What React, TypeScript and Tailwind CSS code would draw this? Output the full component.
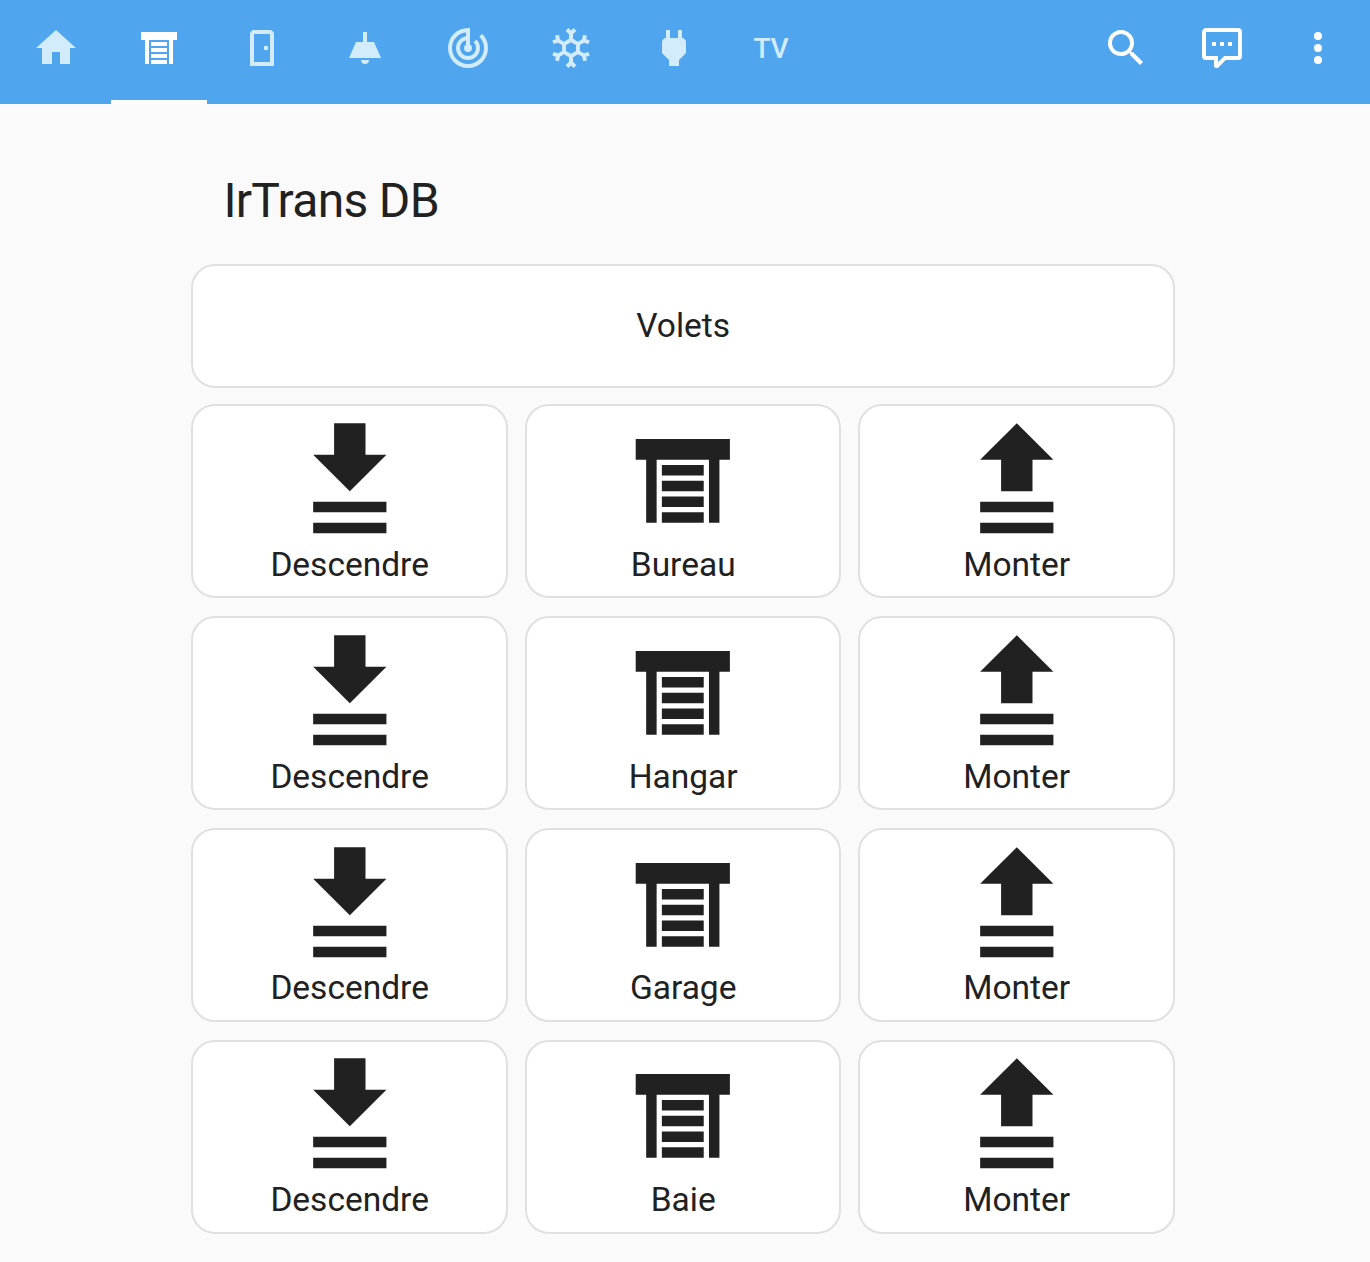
import React from "react";

const P = {
  home: "M10,20V14H14V20H19V12H22L12,3L2,12H5V20H10Z",
  shutter: "M3 4H21V8H19V20H17V8H7V20H5V8H3V4M8 9H16V11H8V9M8 12H16V14H8V12M8 15H16V17H8V15M8 18H16V20H8V18Z",
  door: "M8,3C6.89,3 6,3.89 6,5V21H18V5C18,3.89 17.11,3 16,3H8M8,5H16V19H8V5M13,11V13H15V11H13Z",
  lamp: "M11 4H13V9H16.5L20 17H4L7.5 9H11ZM10 18H14A2 2 0 0 1 10 18Z",
  radar: "M19.07,4.93L17.66,6.34C19.1,7.79 20,9.79 20,12A8,8 0 0,1 12,20A8,8 0 0,1 4,12C4,7.92 7.05,4.56 11,4.07V6.09C8.16,6.57 6,9.03 6,12A6,6 0 0,0 12,18A6,6 0 0,0 18,12C18,10.34 17.33,8.84 16.24,7.76L14.83,9.17C15.55,9.9 16,10.9 16,12A4,4 0 0,1 12,16A4,4 0 0,1 8,12C8,10.14 9.28,8.59 11,8.14V10.28C10.4,10.63 10,11.26 10,12A2,2 0 0,0 12,14A2,2 0 0,0 14,12C14,11.26 13.6,10.62 13,10.28V2H12A10,10 0 0,0 2,12A10,10 0 0,0 12,22A10,10 0 0,0 22,12C22,9.24 20.88,6.74 19.07,4.93Z",
  snow: "M20.79,13.95L18.46,14.57L16.46,13.44V10.56L18.46,9.43L20.79,10.05L21.31,8.12L19.54,7.65L20,5.88L18.07,5.36L17.45,7.69L15.45,8.82L13,7.38V5.12L14.71,3.41L13.29,2L12,3.29L10.71,2L9.29,3.41L11,5.12V7.38L8.5,8.82L6.5,7.69L5.92,5.36L4,5.88L4.47,7.65L2.7,8.12L3.22,10.05L5.55,9.43L7.55,10.56V13.45L5.55,14.58L3.22,13.96L2.7,15.89L4.47,16.36L4,18.12L5.93,18.64L6.55,16.31L8.55,15.18L11,16.62V18.88L9.29,20.59L10.71,22L12,20.71L13.29,22L14.7,20.59L13,18.88V16.62L15.5,15.17L17.5,16.3L18.12,18.63L20,18.12L19.53,16.35L21.3,15.88L20.79,13.95M9.5,10.56L12,9.11L14.5,10.56V13.44L12,14.89L9.5,13.44V10.56Z",
  plug: "M16,7V3H14V7H10V3H8V7H8C7,7 6,8 6,9V14.5L9.5,18V21H14.5V18L18,14.5V9C18,8 17,7 16,7Z",
  search: "M9.5,3A6.5,6.5 0 0,1 16,9.5C16,11.11 15.41,12.59 14.44,13.73L14.71,14H15.5L20.5,19L19,20.5L14,15.5V14.71L13.73,14.44C12.59,15.41 11.11,16 9.5,16A6.5,6.5 0 0,1 3,9.5A6.5,6.5 0 0,1 9.5,3M9.5,5C7,5 5,7 5,9.5C5,12 7,14 9.5,14C12,14 14,12 14,9.5C14,7 12,5 9.5,5Z",
  chat: "M9,22A1,1 0 0,1 8,21V18H4A2,2 0 0,1 2,16V4C2,2.89 2.9,2 4,2H20A2,2 0 0,1 22,4V16A2,2 0 0,1 20,18H13.9L10.2,21.71C10,21.9 9.75,22 9.5,22V22H9M10,16V19.08L13.08,16H20V4H4V16H10M17,11H15V9H17V11M13,11H11V9H13V11M9,11H7V9H9V11Z",
  dots: "M12,16A2,2 0 0,1 14,18A2,2 0 0,1 12,20A2,2 0 0,1 10,18A2,2 0 0,1 12,16M12,10A2,2 0 0,1 14,12A2,2 0 0,1 12,14A2,2 0 0,1 10,12A2,2 0 0,1 12,10M12,4A2,2 0 0,1 14,6A2,2 0 0,1 12,8A2,2 0 0,1 10,6A2,2 0 0,1 12,4Z",
  down: "M9 1H15V7H19L12 14L5 7H9ZM5 16H19V18H5ZM5 20H19V22H5Z",
  up: "M12 1L19 8H15V14H9V8H5ZM5 16H19V18H5ZM5 20H19V22H5Z",
};

function Icon({ d, className }: { d: string; className: string }) {
  return (
    <svg viewBox="0 0 24 24" className={className} fill="currentColor">
      <path d={d} />
    </svg>
  );
}

const tabs = [P.home, P.shutter, P.door, P.lamp, P.radar, P.snow, P.plug];
const rows = ["Bureau", "Hangar", "Garage", "Baie"];

function Tile({ d, label }: { d: string; label: string }) {
  return (
    <div className="flex flex-col items-center rounded-[24px] border-2 border-[#e0e0e0] bg-white pt-[11.85px] pb-[10.55px]">
      <Icon d={d} className="block h-[125.6px] w-[125.6px] text-[#212121]" />
      <span className="text-[33.5px] leading-[42px] text-[#212121]">{label}</span>
    </div>
  );
}

export default function App() {
  return (
    <div className="min-h-[1262px] bg-[#fafafa] font-['Roboto',sans-serif]">
      <header className="flex h-[104px] items-start justify-between bg-[#4fa6ee] pr-1 pl-2">
        <nav className="flex gap-[7px]">
          {tabs.map((d, i) => (
            <div
              key={i}
              className={
                i === 1
                  ? "flex h-[104px] w-[96px] items-center justify-center border-b-4 border-white pb-1 text-white"
                  : "flex h-[104px] w-[96px] items-center justify-center border-b-4 border-transparent pb-1 text-[#d3ecfb]"
              }
            >
              <Icon d={d} className="h-12 w-12" />
            </div>
          ))}
          <div className="flex h-[104px] w-[84px] items-center justify-center border-b-4 border-transparent pt-[2px] pb-1 text-[28px] font-medium tracking-[-0.01em] text-[#d3ecfb]">
            TV
          </div>
        </nav>
        <div className="flex">
          {[P.search, P.chat, P.dots].map((d, i) => (
            <div key={i} className="flex h-24 w-24 items-center justify-center text-white">
              <Icon d={d} className="h-12 w-12" />
            </div>
          ))}
        </div>
      </header>
      <main className="ml-[191.4px] w-[983.6px]">
        <h1 className="pt-[65px] pl-[32px] text-[48px] leading-[64px] font-normal tracking-[-0.014em] text-[#212121]">IrTrans DB</h1>
        <div className="mt-[31px] flex h-[124px] items-center justify-center rounded-[24px] border-2 border-[#e0e0e0] bg-white text-[33.5px] text-[#212121]">
          Volets
        </div>
        <div className="mt-[16.4px] flex flex-col gap-[17.75px]">
          {rows.map((r) => (
            <div key={r} className="grid grid-cols-3 gap-x-[17px]">
              <Tile d={P.down} label="Descendre" />
              <Tile d={P.shutter} label={r} />
              <Tile d={P.up} label="Monter" />
            </div>
          ))}
        </div>
      </main>
    </div>
  );
}
